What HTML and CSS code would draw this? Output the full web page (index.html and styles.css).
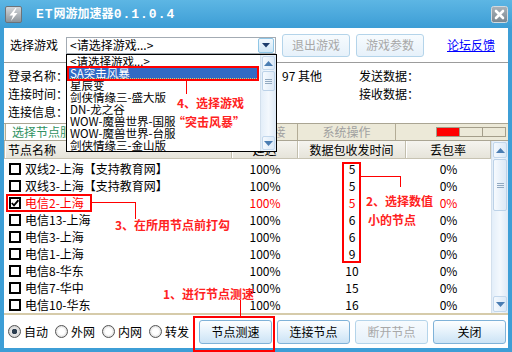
FILE: index.html
```html
<!DOCTYPE html>
<html lang="zh-CN">
<head>
  <meta charset="UTF-8" />
  <title>ET网游加速器</title>
  <link rel="stylesheet" href="styles.css">
</head>
<body>
  <div class="window">
    <div class="titlebar">
      <svg class="app-icon" width="17" height="17" viewBox="0 0 17 17">
        <defs>
          <linearGradient id="ig" x1="0" y1="0" x2="0" y2="1">
            <stop offset="0" stop-color="#d4d8dc"/>
            <stop offset="1" stop-color="#8c9399"/>
          </linearGradient>
        </defs>
        <rect x="0.5" y="0.5" width="16" height="16" rx="1.5" fill="url(#ig)" stroke="#6c7379"/>
        <path d="M10.5 2 L4.5 9.5 H8 L6 15 L12.5 7 H9 L11.5 2 Z" fill="#fff"/>
      </svg>
      <div class="title"><span class="latin">ET</span>网游加速器<span class="latin">0.1.0.4</span></div>
      <svg class="close" width="17" height="17" viewBox="0 0 17 17">
        <defs>
          <linearGradient id="cg" x1="0" y1="0" x2="0" y2="1">
            <stop offset="0" stop-color="#aab3ba"/>
            <stop offset="1" stop-color="#7b868f"/>
          </linearGradient>
        </defs>
        <rect x="0.5" y="0.5" width="16" height="16" rx="2" fill="url(#cg)" stroke="#d3dadf"/>
        <path d="M5 5 L12 12 M12 5 L5 12" stroke="#fff" stroke-width="2.6" stroke-linecap="round"/>
      </svg>
    </div>

    <div class="client">
      <div class="toolbar">
        <span class="label">选择游戏</span>
        <div class="combo">
          <span class="combo-text">&lt;请选择游戏...&gt;</span>
          <span class="combo-btn">
            <svg width="8" height="5" viewBox="0 0 8 5"><polygon points="0,0 8,0 4,4.5" fill="#1c3c6c"/></svg>
          </span>
        </div>
        <button class="btn off">退出游戏</button>
        <button class="btn off">游戏参数</button>
        <a class="link" href="#">论坛反馈</a>
      </div>

      <div class="info">
        <span>登录名称：</span><span>97 其他</span><span>发送数据：</span>
        <span>连接时间：</span><span></span><span>接收数据：</span>
        <span>连接信息：</span><span></span><span></span>
      </div>

      <div class="tabs">
        <div class="tab active">选择节点服务器</div>
        <div class="tab t-speed">加速状态</div>
        <div class="tab t-net">网络连接</div>
        <div class="tab t-sys">系统操作</div>
        <div class="status"><i class="on"></i><i></i><i></i></div>
      </div>

      <div class="list">
        <div class="table">
          <div class="head">
            <div class="c1">节点名称</div>
            <div class="c2">延迟</div>
            <div class="c3">数据包收发时间</div>
            <div class="c4">丢包率</div>
          </div>
          <div class="rows">
            <div class="row"><div class="c1"><span class="chk"></span>双线2-上海【支持教育网】</div><div class="c2">100%</div><div class="c3">5</div><div class="c4">0%</div></div>
            <div class="row"><div class="c1"><span class="chk"></span>双线3-上海【支持教育网】</div><div class="c2">100%</div><div class="c3">5</div><div class="c4">0%</div></div>
            <div class="row picked"><div class="c1"><span class="chk"><svg width="8" height="8" viewBox="0 0 8 8"><polyline points="0.8,4 3,6.4 7.4,1.2" fill="none" stroke="#000" stroke-width="1.8"/></svg></span>电信2-上海</div><div class="c2">100%</div><div class="c3">5</div><div class="c4">0%</div></div>
            <div class="row"><div class="c1"><span class="chk"></span>电信13-上海</div><div class="c2">100%</div><div class="c3">6</div><div class="c4">0%</div></div>
            <div class="row"><div class="c1"><span class="chk"></span>电信3-上海</div><div class="c2">100%</div><div class="c3">6</div><div class="c4">0%</div></div>
            <div class="row"><div class="c1"><span class="chk"></span>电信1-上海</div><div class="c2">100%</div><div class="c3">9</div><div class="c4">0%</div></div>
            <div class="row"><div class="c1"><span class="chk"></span>电信8-华东</div><div class="c2">100%</div><div class="c3">10</div><div class="c4">0%</div></div>
            <div class="row"><div class="c1"><span class="chk"></span>电信7-华中</div><div class="c2">100%</div><div class="c3">15</div><div class="c4">0%</div></div>
            <div class="row"><div class="c1"><span class="chk"></span>电信10-华东</div><div class="c2">100%</div><div class="c3">16</div><div class="c4">0%</div></div>
          </div>
        </div>
        <div class="vscroll">
          <span class="sb-btn"><svg width="9" height="5" viewBox="0 0 9 5"><polygon points="0,5 9,5 4.5,0" fill="#4a7db3"/></svg></span>
          <span class="sb-thumb tall"><i class="grip"></i></span>
          <span class="sb-fill"></span>
          <span class="sb-btn"><svg width="9" height="5" viewBox="0 0 9 5"><polygon points="0,0 9,0 4.5,5" fill="#4a7db3"/></svg></span>
        </div>
      </div>

      <div class="footer">
        <div class="radios">
          <label class="radio"><span class="dot on"></span>自动</label>
          <label class="radio"><span class="dot"></span>外网</label>
          <label class="radio"><span class="dot"></span>内网</label>
          <label class="radio"><span class="dot"></span>转发</label>
        </div>
        <div class="actions">
          <button class="btn big">节点测速</button>
          <button class="btn big">连接节点</button>
          <button class="btn big off">断开节点</button>
          <button class="btn big">关闭</button>
        </div>
      </div>
    </div>

    <!-- open combo list -->
    <div class="dropdown">
      <div class="dd-items">
        <div class="dd-item">&lt;请选择游戏...&gt;</div>
        <div class="dd-item sel">SA突击风暴</div>
        <div class="dd-item">星辰变</div>
        <div class="dd-item">剑侠情缘三-盛大版</div>
        <div class="dd-item">DN-龙之谷</div>
        <div class="dd-item">WOW-魔兽世界-国服</div>
        <div class="dd-item">WOW-魔兽世界-台服</div>
        <div class="dd-item">剑侠情缘三-金山版</div>
      </div>
      <div class="vscroll dd-scroll">
        <span class="sb-btn"><svg width="9" height="5" viewBox="0 0 9 5"><polygon points="0,5 9,5 4.5,0" fill="#4a7db3"/></svg></span>
        <span class="sb-thumb"><i class="grip"></i></span>
        <span class="sb-fill"></span>
        <span class="sb-btn"><svg width="9" height="5" viewBox="0 0 9 5"><polygon points="0,0 9,0 4.5,5" fill="#4a7db3"/></svg></span>
      </div>
    </div>

    <!-- red help marks -->
    <div class="mark mark-game"></div>
    <div class="wire wire-game"></div>
    <div class="tip tip-game1">4、选择游戏</div>
    <div class="tip tip-game2">“突击风暴”</div>

    <div class="mark mark-time"></div>
    <div class="wire wire-time-h"></div>
    <div class="wire wire-time-v"></div>
    <div class="tip tip-time1">2、选择数值</div>
    <div class="tip tip-time2">小的节点</div>

    <div class="mark mark-node"></div>
    <div class="wire wire-node-h"></div>
    <div class="wire wire-node-v"></div>
    <div class="tip tip-node">3、在所用节点前打勾</div>

    <div class="mark mark-test"></div>
    <div class="wire wire-test"></div>
    <div class="tip tip-test">1、进行节点测速</div>
  </div>
</body>
</html>
```

FILE: styles.css
```css
* {
  box-sizing: border-box;
}

body {
  margin: 0;
  width: 512px;
  height: 352px;
  overflow: hidden;
  font-family: "Noto Sans CJK SC", "Liberation Sans", sans-serif;
  font-size: 12px;
  line-height: 14px;
  color: #000;
}

.window {
  position: relative;
  width: 512px;
  height: 352px;
  display: flex;
  flex-direction: column;
  background: #3d9ed6;
}

/* title bar */
.titlebar {
  height: 28px;
  flex: none;
  display: flex;
  align-items: center;
  padding: 0 4px 0 5px;
  background: linear-gradient(#5db6e4, #3c9dd5);
}

.app-icon,
.close {
  flex: none;
}

.title {
  flex: 1;
  margin-left: 14px;
  color: #fff;
  font-weight: bold;
  font-size: 12px;
}

.title .latin {
  font-family: "Liberation Mono", monospace;
  font-size: 13px;
  letter-spacing: 1px;
}

/* client area */
.client {
  flex: 1;
  margin: 0 4px 4px;
  background: #fff;
  display: flex;
  flex-direction: column;
}

.toolbar {
  height: 34px;
  flex: none;
  display: flex;
  align-items: center;
  padding-left: 6px;
}

.toolbar .label {
  width: 48px;
  margin-right: 8px;
}

.combo {
  width: 210px;
  height: 17px;
  border: 1px solid #a3abb3;
  display: flex;
  align-items: center;
  padding-left: 3px;
}

.combo-text {
  flex: 1;
}

.combo-btn {
  width: 16px;
  height: 15px;
  margin-right: 1px;
  display: flex;
  align-items: center;
  justify-content: center;
  border: 1px solid #8fc6e6;
  border-radius: 2px;
  background: linear-gradient(#f2f8fd, #cfe6f6);
}

.btn {
  font: inherit;
  padding: 0;
  width: 68px;
  height: 23px;
  margin-left: 6px;
  color: #000;
  border: 1px solid #7fb2d8;
  border-radius: 3px;
  background: linear-gradient(#fdfeff, #e4f1fb 50%, #cbe3f5);
}

.btn.off {
  color: #a8a8a8;
  border-color: #b4d4ea;
  background: linear-gradient(#f7fbfe, #e6f1fa);
}

.link {
  margin-left: 23px;
  color: #0000ff;
  text-decoration: underline;
}

/* info panel */
.info {
  height: 61px;
  flex: none;
  border-top: 1px solid #9c9c9c;
  padding: 4px 0 0 4px;
  display: grid;
  grid-template-columns: 274px 77px 1fr;
  grid-auto-rows: 18px;
  align-items: center;
}

/* tab strip */
.tabs {
  height: 18px;
  flex: none;
  display: flex;
  background: #ece9d8;
  border-top: 1px solid #aaa593;
  border-bottom: 1px solid #aaa593;
}

.tab {
  border-right: 1px solid #b3ac96;
  color: #a0a0a0;
  text-align: center;
  line-height: 16px;
}

.tab.active {
  width: 96px;
  margin-left: 1px;
  padding-left: 6px;
  text-align: left;
  background: #fff;
  color: #2f9262;
  border-left: 1px solid #b3ac96;
}

.t-speed { width: 125px; }
.t-net { width: 72px; }
.t-sys { width: 98px; }

.status {
  flex: 1;
  display: flex;
  align-items: center;
  justify-content: flex-end;
  padding-right: 2px;
}

.status i {
  width: 24px;
  height: 10px;
  border: 1px solid #a49e8a;
  margin-left: -1px;
}

.status i.on {
  background: #ff0000;
}

/* node list */
.list {
  height: 172px;
  flex: none;
  display: flex;
}

.table {
  flex: 1;
}

.head {
  height: 18px;
  display: flex;
  background: linear-gradient(#f5f4ef, #e6e4da);
  border-bottom: 1px solid #c7c3b3;
}

.head > div {
  border-right: 1px solid #c2bead;
  box-shadow: inset 1px 0 #fff;
  text-align: center;
  line-height: 17px;
}

.head .c1 {
  text-align: left;
  padding-left: 3px;
  border-left: 1px solid #c2bead;
}

.c1 { width: 228px; }
.c2 { width: 66px; }
.c3 { width: 108px; }
.c4 { width: 85px; }

.rows {
  padding-top: 1px;
}

.row {
  height: 17px;
  display: flex;
  align-items: center;
}

.row > div {
  text-align: center;
}

.row .c1 {
  display: flex;
  align-items: center;
  padding-left: 5px;
  text-align: left;
}

.chk {
  width: 12px;
  height: 12px;
  margin-right: 4px;
  border: 2px solid #000;
  background: #fff;
  display: flex;
  align-items: center;
  justify-content: center;
}

.row.picked {
  color: #ff0000;
}

/* scroll bars */
.vscroll {
  width: 17px;
  display: flex;
  flex-direction: column;
  background: linear-gradient(to right, #e3eef9, #f3f8fd 50%, #dde9f6);
  border-left: 1px solid #d3e0ed;
}

.sb-btn {
  height: 16px;
  flex: none;
  display: flex;
  align-items: center;
  justify-content: center;
  margin: 1px;
  border: 1px solid #c2d7ec;
  border-radius: 2px;
  background: linear-gradient(to right, #f4f9fe, #dbe9f7);
}

.sb-thumb {
  height: 20px;
  flex: none;
  margin: 0 1px;
  display: flex;
  align-items: center;
  justify-content: center;
  border: 1px solid #bcd2e8;
  border-radius: 2px;
  background: linear-gradient(to right, #f6fafe, #dde9f6);
}

.sb-thumb.tall {
  height: 52px;
}

.grip {
  width: 7px;
  height: 5px;
  background: repeating-linear-gradient(#92a9c0 0 1px, transparent 1px 2px);
}

.sb-fill {
  flex: 1;
}

/* bottom bar */
.footer {
  flex: 1;
  display: flex;
  align-items: center;
  padding-left: 4px;
  border-top: 2px solid #d6cbaa;
}

.radios {
  display: flex;
  gap: 7px;
}

.radio {
  width: 40px;
  display: flex;
  align-items: center;
  gap: 3px;
}

.dot {
  width: 13px;
  height: 13px;
  border-radius: 50%;
  border: 1px solid #555;
  background: radial-gradient(circle, #fff 0 3px, #d9d9d9 6px);
}

.dot.on {
  background: radial-gradient(circle, #2c3e50 0 2.5px, #e8e8e8 3px, #cfcfcf 6px);
}

.actions {
  display: flex;
  gap: 5px;
  margin-left: 10px;
}

.btn.big {
  width: 73px;
  height: 24px;
  margin-left: 0;
}

/* dropdown list of the game combo */
.dropdown {
  position: absolute;
  left: 66px;
  top: 54px;
  width: 211px;
  height: 98px;
  border: 1px solid #000;
  background: #fff;
  display: flex;
  overflow: hidden;
}

.dd-items {
  flex: 1;
}

.dd-item {
  height: 12px;
  line-height: 12px;
  font-size: 11.5px;
  padding-left: 3px;
  white-space: nowrap;
}

.dd-item.sel {
  margin: 0 1px;
  padding-left: 2px;
  background: #316ac5;
  color: #fff;
  outline: 1px dotted #e8c860;
  outline-offset: -1px;
}

.dd-scroll {
  width: 16px;
}

.dd-scroll .sb-btn {
  height: 14px;
}

/* red annotations */
.mark {
  position: absolute;
  border: 2px solid #ff0000;
}

.mark-game { left: 67px; top: 66px; width: 192px; height: 15px; }
.mark-time { left: 342px; top: 162px; width: 19px; height: 101px; }
.mark-node { left: 6px; top: 194px; width: 86px; height: 18px; }
.mark-test { left: 193px; top: 316px; width: 82px; height: 36px; }

.wire {
  position: absolute;
  background: #ff0000;
}

.wire-game { left: 186px; top: 81px; width: 1px; height: 13px; }
.wire-time-h { left: 361px; top: 176px; width: 40px; height: 1px; }
.wire-time-v { left: 400px; top: 176px; width: 1px; height: 11px; }
.wire-node-h { left: 92px; top: 202px; width: 44px; height: 1px; }
.wire-node-v { left: 135px; top: 202px; width: 1px; height: 17px; }
.wire-test { left: 240px; top: 300px; width: 1px; height: 16px; }

.tip {
  position: absolute;
  color: #ff2222;
  font-weight: bold;
  white-space: nowrap;
}

.tip-game1 { left: 177px; top: 96px; }
.tip-game2 { left: 173px; top: 115px; }
.tip-time1 { left: 366px; top: 194px; }
.tip-time2 { left: 368px; top: 213px; }
.tip-node { left: 115px; top: 218px; }
.tip-test { left: 163px; top: 287px; }
```
